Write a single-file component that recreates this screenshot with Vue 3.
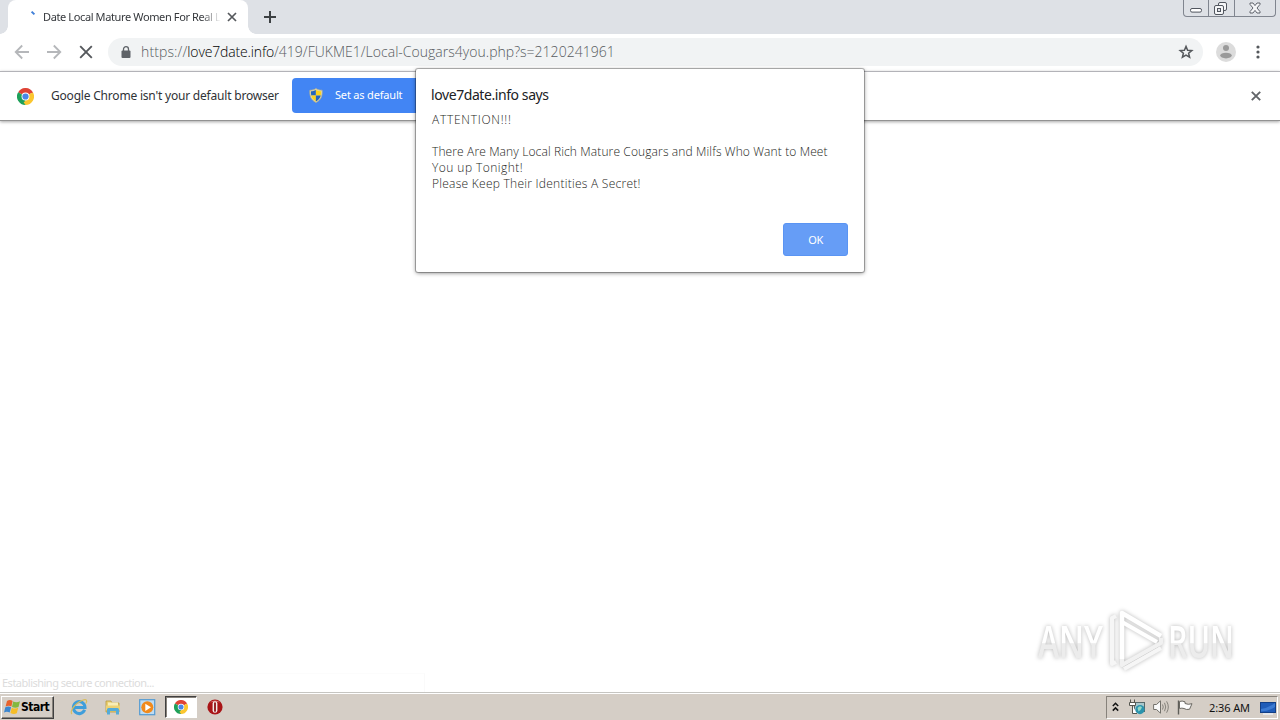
<template>
  <div class="screen">
    <div class="tab-strip">
      <div class="prev-tab"></div>
      <div class="tab">
        <svg class="spinner" width="16" height="16" viewBox="0 0 16 16">
          <path d="M5.6 2.6 L8.4 5.4" stroke="#3f7fd8" stroke-width="2" fill="none" />
        </svg>
        <span class="tab-title">{{ tabTitle }}</span>
        <svg class="tab-close" width="10" height="10" viewBox="0 0 10 10">
          <path d="M1 1 L9 9 M9 1 L1 9" stroke="#55585c" stroke-width="1.7" />
        </svg>
      </div>
      <div class="tab-foot"></div>
      <svg class="new-tab" width="12" height="12" viewBox="0 0 12 12">
        <path d="M6 0 V12 M0 6 H12" stroke="#3c4043" stroke-width="2" />
      </svg>
      <div class="window-buttons">
        <span class="win-btn min">
          <svg width="13" height="6" viewBox="0 0 13 6">
            <rect x="0.5" y="1.5" width="11" height="3.6" rx="1.5" fill="#fff" stroke="#51565f" />
          </svg>
        </span>
        <span class="win-btn max">
          <svg width="14" height="13" viewBox="0 0 14 13">
            <rect x="4.5" y="0.5" width="8" height="8" rx="1.5" fill="#f5f6f8" stroke="#51565f" />
            <rect x="0.5" y="3.5" width="9" height="9" rx="1.5" fill="#f5f6f8" stroke="#51565f" />
            <rect x="3.5" y="6.5" width="3" height="3" fill="#dee1e6" stroke="#51565f" />
          </svg>
        </span>
        <span class="win-btn close">
          <svg width="12" height="12" viewBox="0 0 12 12">
            <path d="M1 1 H4 L6 3.6 L8 1 H11 V2.4 L8 6 L11 9.6 V11 H8 L6 8.4 L4 11 H1 V9.6 L4 6 L1 2.4 Z" fill="#f5f6f8" stroke="#51565f" stroke-width="0.9" />
          </svg>
        </span>
      </div>
    </div>

    <div class="toolbar">
      <svg class="nav" width="16" height="16" viewBox="0 0 16 16">
        <path d="M15 8 H2 M8.2 1.5 L1.7 8 L8.2 14.5" fill="none" stroke="#b5b7ba" stroke-width="1.8" />
      </svg>
      <svg class="nav" width="16" height="16" viewBox="0 0 16 16">
        <path d="M1 8 H14 M7.8 1.5 L14.3 8 L7.8 14.5" fill="none" stroke="#b5b7ba" stroke-width="1.8" />
      </svg>
      <svg class="nav" width="16" height="16" viewBox="0 0 16 16">
        <path d="M2.2 2.2 L13.8 13.8 M13.8 2.2 L2.2 13.8" stroke="#55585c" stroke-width="1.9" />
      </svg>
      <div class="omnibox">
        <svg class="lock" width="10" height="13" viewBox="0 0 10 13">
          <rect x="0.5" y="4.5" width="9" height="7.5" rx="1" fill="#5f6368" />
          <path d="M2.5 5 V3.2 A2.5 2.5 0 0 1 7.5 3.2 V5" fill="none" stroke="#5f6368" stroke-width="1.3" />
        </svg>
        <span class="url"><span class="scheme">https://</span><span class="host">love7date.info</span><span class="path">/419/FUKME1/Local-Cougars4you.php?s=2120241961</span></span>
        <svg class="star" width="16" height="16" viewBox="0 0 16 16">
          <path d="M8 2.4 L9.6 6.2 L13.8 6.5 L10.6 9.2 L11.6 13.2 L8 11.1 L4.4 13.2 L5.4 9.2 L2.2 6.5 L6.4 6.2 Z" fill="none" stroke="#55585c" stroke-width="1.5" />
        </svg>
      </div>
      <svg class="avatar" width="20" height="20" viewBox="0 0 20 20">
        <circle cx="10" cy="10" r="10" fill="#dcdcdc" />
        <circle cx="10" cy="6" r="3" fill="#9a9a9a" />
        <ellipse cx="10" cy="13.6" rx="5.8" ry="2.8" fill="#9a9a9a" />
      </svg>
      <svg class="menu-dots" width="4" height="14" viewBox="0 0 4 14">
        <circle v-for="y in [2, 7, 12]" :key="y" cx="2" :cy="y" r="1.6" fill="#55585c" />
      </svg>
    </div>

    <div class="infobar">
      <svg class="info-logo" width="17" height="17" viewBox="0 0 18 18">
        <path d="M9 9 L1.2 4.5 A9 9 0 0 1 16.8 4.5 Z" fill="#df4335" />
        <path d="M9 9 L16.8 4.5 A9 9 0 0 1 9 18 Z" fill="#fbc62f" />
        <path d="M9 9 L9 18 A9 9 0 0 1 1.2 4.5 Z" fill="#1ea05a" />
        <path d="M9 5 H17 L16.8 4.5 H9 Z" fill="#df4335" />
        <path d="M12.5 11 L9 18 L7 15 Z" fill="#fbc62f" />
        <circle cx="9" cy="9" r="4.2" fill="#fff" />
        <circle cx="9" cy="9" r="3.3" fill="#4a86e8" />
      </svg>
      <span class="info-text">Google Chrome isn't your default browser</span>
      <div class="default-btn">
        <svg width="14" height="15" viewBox="0 0 14 15">
          <path d="M7 0.6 C5 2 3 2.3 0.9 2.2 C0.5 8 2 12 7 14.4 C12 12 13.5 8 13.1 2.2 C11 2.3 9 2 7 0.6 Z" fill="#e7dcae" stroke="#b9b48b" stroke-width="0.8" />
          <path d="M6.9 2 C5 3 3.5 3.3 2 3.3 Q1.8 5.5 2.2 7.4 H6.9 Z" fill="#2565bd" />
          <path d="M6.9 2 C9 3 10.5 3.3 12 3.3 Q12.2 5.5 11.8 7.4 H6.9 Z" fill="#fbd21d" />
          <path d="M2.2 7.4 H6.9 V13.4 Q3 11 2.2 7.4 Z" fill="#fbd21d" />
          <path d="M11.8 7.4 H6.9 V13.4 Q11 11 11.8 7.4 Z" fill="#2565bd" />
        </svg>
        <span>Set as default</span>
      </div>
      <svg class="info-close" width="10" height="10" viewBox="0 0 10 10">
        <path d="M0.8 0.8 L9.2 9.2 M9.2 0.8 L0.8 9.2" stroke="#626569" stroke-width="1.9" />
      </svg>
    </div>

    <div class="page">
      <svg class="watermark" width="220" height="76" viewBox="0 0 220 76">
        <defs>
          <linearGradient id="fade" x1="0" y1="0" x2="0" y2="1">
            <stop offset="0.54" stop-color="#ffffff" />
            <stop offset="0.56" stop-color="#ececec" />
          </linearGradient>
        </defs>
        <g class="mark-text" fill="url(#fade)">
          <text x="8" y="55" textLength="65" lengthAdjust="spacingAndGlyphs">ANY</text>
          <text x="138" y="55" textLength="66" lengthAdjust="spacingAndGlyphs">RUN</text>
        </g>
        <g class="mark-play" fill="none" stroke-linejoin="round">
          <path d="M86 13 L82 15 V61 L86 59 M94 66 L131 45" stroke="#f6f6f6" stroke-width="4" />
          <path d="M92 56 V10 L131 33" stroke="#ffffff" stroke-width="4.5" />
          <path d="M92 19 L127 39" stroke="#ffffff" stroke-width="4" />
          <path d="M131 35 V40 L92 62 V56" stroke="#f1f1f1" stroke-width="4" />
        </g>
      </svg>
      <div class="status"><span>Establishing secure connection...</span></div>
    </div>

    <div class="taskbar">
      <div class="start">
        <svg width="17" height="16" viewBox="0 0 17 16">
          <path d="M3 2 Q6 0 8.6 2 L7.4 7.5 Q4.8 6 1.6 7.6 Z" fill="#e8622c" />
          <path d="M9.2 2.4 Q12.4 4.1 16 2.2 L14.5 8 Q11.5 9.6 8 8 Z" fill="#83b83f" />
          <path d="M1.3 8.3 Q4.5 6.8 7.1 8.3 L5.7 13.5 Q3 12 0 13.4 Z" fill="#3c86cf" />
          <path d="M7.8 8.7 Q11.2 10.4 14.2 8.8 L12.8 14.2 Q9.8 15.8 6.4 14 Z" fill="#f6bd27" />
        </svg>
        <span>Start</span>
      </div>
      <div class="task-icon">
        <svg width="18" height="18" viewBox="0 0 18 18">
          <path d="M14.6 11.8 A5.8 6 0 1 1 15 9.4 H5" fill="none" stroke="#3f9edb" stroke-width="3" />
          <path d="M2 16 C-1 14 5 5 12.5 2.2 C17 0.5 17.5 3 15.8 5.5" fill="none" stroke="#d9bd5c" stroke-width="1.2" />
        </svg>
      </div>
      <div class="task-icon">
        <svg width="16" height="16" viewBox="0 0 16 16">
          <path d="M1 2 H6 L7 4 H14 V13 H1 Z" fill="#e9cf70" stroke="#b99a3f" stroke-width="0.8" />
          <path d="M3 3.5 H13 V8 H3 Z" fill="#f9edb6" />
          <path d="M1 6.5 H15 V11 H1 Z" fill="#edd274" />
          <path d="M2 15.5 V10.5 Q2 9 3.5 9 H12.5 Q14 9 14 10.5 V15.5 H11 V12 H5 V15.5 Z" fill="#55abd8" />
        </svg>
      </div>
      <div class="task-icon">
        <svg width="17" height="17" viewBox="0 0 17 17">
          <rect x="0.7" y="0.7" width="15" height="15" fill="#bfdcf2" stroke="#539bd2" stroke-width="1.2" />
          <circle cx="8.3" cy="8.3" r="6" fill="#f18a1c" />
          <path d="M6.3 4.7 L12 8.3 L6.3 11.9 Z" fill="#fff" />
        </svg>
      </div>
      <div class="task-icon active">
        <svg width="14" height="14" viewBox="0 0 18 18">
          <path d="M9 9 L1.2 4.5 A9 9 0 0 1 16.8 4.5 Z" fill="#df4335" />
          <path d="M9 9 L16.8 4.5 A9 9 0 0 1 9 18 Z" fill="#fbc62f" />
          <path d="M9 9 L9 18 A9 9 0 0 1 1.2 4.5 Z" fill="#1ea05a" />
          <path d="M12.5 11 L9 18 L7 15 Z" fill="#fbc62f" />
          <circle cx="9" cy="9" r="4.2" fill="#fff" />
          <circle cx="9" cy="9" r="3.3" fill="#4a86e8" />
        </svg>
      </div>
      <div class="task-icon">
        <svg width="16" height="16" viewBox="0 0 16 16">
          <circle cx="8" cy="8" r="7.6" fill="#a91417" />
          <path d="M3 3.6 A7 7 0 0 1 13 3.6 Q8 1.8 3 3.6 Z" fill="#d8696a" />
          <rect x="5.6" y="2.2" width="4.8" height="11.6" rx="2.4" fill="#f4ecea" />
          <rect x="7.1" y="3.2" width="1.8" height="9.6" rx="0.9" fill="#8d1014" />
        </svg>
      </div>
      <div class="tray">
        <svg class="chevrons" width="7" height="10" viewBox="0 0 7 10">
          <path d="M0.8 4 L3.5 1.3 L6.2 4 M0.8 8.6 L3.5 5.9 L6.2 8.6" fill="none" stroke="#111" stroke-width="1.5" />
        </svg>
        <svg class="net" width="17" height="16" viewBox="0 0 17 16">
          <rect x="5.5" y="3.5" width="10" height="9" fill="#a9c8cc" stroke="#56686a" />
          <path d="M1.5 0.5 V3.5 M5.5 0.5 V3.5 M0.5 3.5 H6.5 V6.5 H0.5 Z M3.5 6.5 V14.5 H8" fill="#fff" stroke="#55564f" />
          <circle cx="11" cy="10.6" r="4.6" fill="#2b93ad" />
          <path d="M8.5 9 Q11 6 13 8.5 Q12 11 9.5 12.5 Z" fill="#93d8c5" />
        </svg>
        <svg class="speaker" width="17" height="14" viewBox="0 0 17 14">
          <path d="M0.6 4.5 H3.5 L7.5 0.8 V13.2 L3.5 9.5 H0.6 Z" fill="#fafafa" stroke="#73716b" />
          <path d="M9.5 4.5 Q11 7 9.5 9.5 M11.5 2.8 Q14 7 11.5 11.2 M13.6 1.3 Q17 7 13.6 12.7" fill="none" stroke="#85827b" />
        </svg>
        <svg class="flag" width="16" height="15" viewBox="0 0 16 15">
          <path d="M1.5 0.5 V14.5" stroke="#5f5e59" stroke-width="1.4" />
          <path d="M2.5 1.5 Q5 0.5 8 1.8 V3.5 Q11 5 15 3.7 L12.5 9.3 Q9 10 7 8.5 Q5 7.8 2.5 8.5 Z" fill="#fdfdfd" stroke="#6b6963" />
        </svg>
        <span class="clock">2:36 AM</span>
        <svg class="desktop" width="16" height="13" viewBox="0 0 16 13">
          <rect x="0.5" y="0.5" width="15" height="10" fill="#1f5cb8" stroke="#123f86" />
          <path d="M1 7 Q8 6 15 1 V5 Q9 9 1 9.5 Z" fill="#3b7ad2" />
          <path d="M3 12 H13" stroke="#e9edf2" stroke-width="1.6" />
        </svg>
      </div>
    </div>

    <div class="dialog">
      <div class="dialog-title">love7date.info says</div>
      <div class="dialog-body">
        <div v-for="(line, i) in message" :key="i" class="line" :class="line.spacing">{{ line.text }}</div>
      </div>
      <div class="dialog-actions">
        <button class="ok">OK</button>
      </div>
    </div>
  </div>
</template>

<script setup>
import { ref } from 'vue'

const tabTitle = ref('Date Local Mature Women For Real L')
const message = ref([
  { text: 'ATTENTION!!!', spacing: 'wide' },
  { text: '', spacing: '' },
  { text: 'There Are Many Local Rich Mature Cougars and Milfs Who Want to Meet', spacing: 'tight' },
  { text: 'You up Tonight!', spacing: 'loose' },
  { text: 'Please Keep Their Identities A Secret!', spacing: '' }
])
</script>

<style>
body {
  margin: 0;
  overflow: hidden;
}
</style>

<style scoped>
.screen {
  position: relative;
  width: 1280px;
  height: 720px;
  display: flex;
  flex-direction: column;
  background: #fff;
  overflow: hidden;
  font-family: "Noto Sans", "Open Sans", sans-serif;
  white-space: nowrap;
}

svg {
  display: block;
  flex: none;
}

.tab-strip {
  height: 34px;
  display: flex;
  background: #dee1e6;
}

.prev-tab {
  width: 8px;
  background: radial-gradient(circle at 0 0, transparent 7.5px, #fff 8px) 0 26px / 8px 8px no-repeat;
}

.tab {
  width: 240px;
  box-sizing: border-box;
  padding: 0 11px 0 18px;
  display: flex;
  align-items: center;
  background: #fff;
  border-radius: 8px 8px 0 0;
}

.spinner {
  margin-top: -1px;
}

.tab-title {
  width: 177px;
  margin: -2px 0 0 1px;
  font-size: 11px;
  letter-spacing: -0.38px;
  color: #35383c;
  mask-image: linear-gradient(to right, #000 158px, transparent 178px);
}

.tab-close {
  margin-left: 7px;
}

.tab-foot {
  width: 8px;
  background: radial-gradient(circle at 8px 0, transparent 7.5px, #fff 8px) 0 26px / 8px 8px no-repeat;
}

.new-tab {
  margin: 11px 0 0 8px;
}

.window-buttons {
  height: 16px;
  margin: 0 4px 0 auto;
  display: flex;
  border: 1px solid #80858f;
  border-top: 0;
  border-radius: 0 0 4px 4px;
}

.win-btn {
  display: flex;
  justify-content: center;
  box-sizing: border-box;
}

.win-btn + .win-btn {
  border-left: 1px solid #80858f;
}

.min {
  width: 24px;
  padding-top: 7px;
}

.max {
  width: 26px;
  padding: 2px 2px 0 0;
}

.close {
  width: 41px;
  padding-top: 2px;
}

.toolbar {
  height: 37px;
  box-sizing: border-box;
  padding: 0 20px 1px 14px;
  display: flex;
  align-items: center;
  background: #fff;
}

.nav {
  margin-right: 16px;
}

.omnibox {
  width: 1095px;
  height: 28px;
  box-sizing: border-box;
  padding: 0 9px 0 13px;
  margin-left: -2px;
  display: flex;
  align-items: center;
  background: #f1f3f4;
  border-radius: 14px;
}

.url {
  margin: -1px 0 0 10px;
  font-family: "Open Sans", "Noto Sans", sans-serif;
  font-weight: 300;
  font-size: 14px;
  color: #575b60;
}

.scheme {
  letter-spacing: 0.12px;
}

.host {
  color: #000;
  letter-spacing: -0.15px;
}

.path {
  letter-spacing: 0.02px;
}

.star {
  margin-left: auto;
}

.avatar {
  margin-left: 13px;
}

.menu-dots {
  margin-left: 20px;
}

.infobar {
  height: 50px;
  box-sizing: border-box;
  padding: 0 19px 0 17px;
  display: flex;
  align-items: center;
  background: #fff;
  border-top: 1px solid #b3b3b8;
  border-bottom: 1px solid #929292;
  box-shadow: 0 1px 3px rgba(0, 0, 0, 0.35);
  z-index: 1;
}

.info-text {
  width: 228px;
  margin: -2px 0 0 17px;
  font-size: 12px;
  letter-spacing: -0.2px;
  color: #2f3236;
}

.default-btn {
  width: 140px;
  height: 35px;
  box-sizing: border-box;
  padding-left: 17px;
  margin: -1px 0 0 13px;
  display: flex;
  align-items: center;
  gap: 12px;
  border-radius: 4px;
  background: #4285f4;
  color: #fff;
  font-size: 11px;
  letter-spacing: -0.18px;
}

.default-btn span {
  margin-top: -2px;
}

.info-close {
  margin-left: auto;
}

.page {
  position: relative;
  flex: 1;
  background: #fff;
}

.watermark {
  position: absolute;
  left: 1030px;
  top: 482px;
}

.mark-text {
  font: 600 46px "Open Sans", "Liberation Sans", sans-serif;
  filter: drop-shadow(0 0 2px rgba(0, 0, 0, 0.28));
}

.mark-play {
  filter: drop-shadow(0 0 2px rgba(0, 0, 0, 0.28));
}

.status {
  position: absolute;
  left: 0;
  bottom: 0;
  width: 425px;
  height: 19px;
  box-sizing: border-box;
  padding-left: 2px;
  border-top: 1px solid #fcfcfc;
  border-right: 1px solid #fafafa;
  font-size: 11px;
  line-height: 18px;
  letter-spacing: -0.5px;
  color: #dcdcdc;
}

.taskbar {
  height: 28px;
  box-sizing: border-box;
  padding: 3px 2px 1px 1px;
  display: flex;
  align-items: center;
  background: linear-gradient(#c6c5c1 1px, #fff 1px, #fff 2px, #d5cec6 2px);
}

.start {
  width: 53px;
  height: 23px;
  box-sizing: border-box;
  padding-left: 2px;
  margin-right: 9px;
  display: flex;
  align-items: center;
  border: 1px solid;
  border-color: #fff #404040 #404040 #fff;
  box-shadow: inset -1px -1px 0 #87827b;
  font: 700 12px "DejaVu Sans Condensed", "DejaVu Sans", sans-serif;
  letter-spacing: -0.5px;
  color: #000;
}

.task-icon {
  width: 32px;
  height: 22px;
  box-sizing: border-box;
  margin-right: 2px;
  display: flex;
  align-items: center;
  justify-content: center;
}

.active {
  background: #fff;
  border: 1px solid;
  border-color: #404040 #fff #fff #404040;
  box-shadow: inset 1px 1px 0 #87827b;
}

.tray {
  width: 172px;
  height: 23px;
  box-sizing: border-box;
  padding-left: 5px;
  margin-left: auto;
  display: flex;
  align-items: center;
  border: 1px solid;
  border-color: #87827b #fff #fff #87827b;
}

.net {
  margin-left: 10px;
}

.speaker {
  margin-left: 7px;
}

.flag {
  margin-left: 7px;
}

.clock {
  width: 41px;
  margin-left: 16px;
  font-size: 11px;
  letter-spacing: -0.1px;
  color: #111;
}

.desktop {
  margin: 2px 0 0 10px;
}

.dialog {
  position: absolute;
  left: 416px;
  top: 69px;
  width: 448px;
  height: 203px;
  box-sizing: border-box;
  padding: 15px 16px 16px 15px;
  display: flex;
  flex-direction: column;
  background: #fff;
  border-radius: 2px;
  box-shadow: 0 0 0 1px rgba(0, 0, 0, 0.25), 0 1px 4px rgba(0, 0, 0, 0.5);
  z-index: 2;
}

.dialog-title {
  height: 22px;
  font-size: 14px;
  line-height: 22px;
  letter-spacing: -0.42px;
  color: #202124;
}

.dialog-body {
  margin-top: 6px;
  padding-left: 1px;
  font-family: "Open Sans", "Noto Sans", sans-serif;
  font-weight: 300;
  font-size: 12px;
  line-height: 16px;
  letter-spacing: 0.26px;
  color: #1c1e21;
}

.line {
  height: 16px;
}

.wide {
  letter-spacing: 0.72px;
}

.loose {
  letter-spacing: 0.45px;
}

.tight {
  letter-spacing: 0.12px;
}

.dialog-actions {
  margin-top: auto;
  display: flex;
  justify-content: flex-end;
}

.ok {
  width: 65px;
  height: 33px;
  padding: 0;
  border: 1px solid #5a94f3;
  border-radius: 3px;
  background: #669df6;
  color: #fff;
  font: 11px "Noto Sans", sans-serif;
  letter-spacing: -0.4px;
}
</style>
